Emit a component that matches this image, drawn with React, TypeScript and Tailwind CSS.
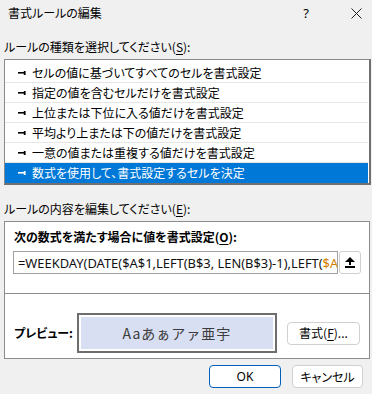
import React from "react";

const rules = [
  "セルの値に基づいてすべてのセルを書式設定",
  "指定の値を含むセルだけを書式設定",
  "上位または下位に入る値だけを書式設定",
  "平均より上または下の値だけを書式設定",
  "一意の値または重複する値だけを書式設定",
  "数式を使用して、書式設定するセルを決定",
];

function Marker({ white }: { white?: boolean }) {
  const c = white ? "#ffffff" : "#000000";
  return (
    <svg width="8" height="6" viewBox="0 0 8 6" className="shrink-0">
      <rect x="0" y="2" width="6" height="1.6" fill={c} />
      <rect x="5.8" y="1" width="1.8" height="4" fill={c} />
    </svg>
  );
}

export default function App() {
  return (
    <div className="w-[372px] h-[394px] bg-[#f0f0f0] flex flex-col font-['Noto_Sans_CJK_JP',sans-serif] text-[12px] leading-[16px] text-black [font-feature-settings:'palt'] overflow-hidden">
      {/* Title bar */}
      <div className="h-[26px] flex items-center pl-[8px] pr-[10px]">
        <span className="flex-1">書式ルールの編集</span>
        <span className="w-[10px] text-center mr-[40px] text-[13px] font-['Noto_Sans',sans-serif]">?</span>
        <svg width="11" height="11" viewBox="0 0 11 11">
          <path d="M0.5 0.5 L10.5 10.5 M10.5 0.5 L0.5 10.5" stroke="#222" strokeWidth="1" />
        </svg>
      </div>

      <div className="mt-[13px] pl-[4px]">
        ルールの種類を選択してください(<span className="underline underline-offset-2">S</span>):
      </div>

      {/* List box */}
      <div className="mt-[4px] ml-[4px] w-[367px] h-[126px] bg-white border-t border-l border-r-2 border-b-2 border-t-[#8a8a8a] border-l-[#8a8a8a] border-r-[#707070] border-b-[#707070] pt-[3px] pr-[1px] flex flex-col">
        {rules.map((r, i) => {
          const sel = i === rules.length - 1;
          return (
            <div
              key={i}
              className={
                sel
                  ? "h-[20px] flex items-center gap-[6px] pl-[13px] bg-[#0078d7] text-white"
                  : "h-[20px] flex items-center gap-[6px] pl-[13px] border-b border-[#e6e6e6]"
              }
            >
              <Marker white={sel} />
              <span className="whitespace-nowrap">{r}</span>
            </div>
          );
        })}
      </div>

      <div className="mt-[16px] pl-[4px]">
        ルールの内容を編集してください(<span className="underline underline-offset-2">E</span>):
      </div>

      {/* Group */}
      <div className="mt-[4px] ml-[4px] w-[366px] h-[138px] bg-white border border-[#8c8c8c] flex flex-col">
        <div className="pt-[7px] pl-[9px] font-bold">
          次の数式を満たす場合に値を書式設定(<span className="underline underline-offset-2">O</span>):
        </div>
        <div className="mt-[6px] ml-[8px] mr-[8px] flex items-center gap-[1px]">
          <div className="w-[326px] h-[23px] border border-[#a0a0a0] bg-white flex items-center pl-[4px] overflow-hidden whitespace-nowrap font-['Noto_Sans',sans-serif] text-[12.9px] text-[#111] [font-feature-settings:normal]">
            =WEEKDAY(DATE($A$1,LEFT(B$3, LEN(B$3)-1),LEFT(<span className="text-[#d08000]">$A$1</span>
          </div>
          <button className="w-[22px] h-[23px] border border-[#cfcfcf] rounded-[3px] bg-white flex items-center justify-center">
            <svg width="10" height="11" viewBox="0 0 10 11">
              <polygon points="5,0 0,5 10,5" fill="#000" />
              <rect x="4" y="5" width="2" height="3" fill="#000" />
              <rect x="0" y="9" width="10" height="2" fill="#000" />
            </svg>
          </button>
        </div>
        <div className="mt-[19px] h-px bg-[#8c8c8c]" />
        <div className="mt-[19px] flex items-center pl-[9px]">
          <span className="w-[63px] font-bold">プレビュー:</span>
          <div className="w-[200px] h-[40px] border-2 border-[#6e6e6e] p-[2px] bg-white">
            <div className="w-full h-full bg-[#d9dff2] flex items-center justify-center text-[14px] text-[#3c3c3c] tracking-[1px] [font-feature-settings:normal]">
              Aaあぁアァ亜宇
            </div>
          </div>
          <button className="ml-[10px] w-[73px] h-[23px] border border-[#d0d0d0] rounded-[4px] bg-white flex items-center justify-center text-[12px]">
            書式(<span className="underline underline-offset-2">F</span>)...
          </button>
        </div>
      </div>

      {/* Bottom buttons */}
      <div className="mt-[6px] flex pl-[209px] gap-[11px]">
        <button className="w-[72px] h-[23px] border border-[#005fb8] rounded-[4px] bg-white flex items-center justify-center font-['Noto_Sans',sans-serif] text-[12px]">
          OK
        </button>
        <button className="w-[71px] h-[23px] border border-[#d0d0d0] rounded-[4px] bg-white flex items-center justify-center text-[12px]">
          キャンセル
        </button>
      </div>
    </div>
  );
}
